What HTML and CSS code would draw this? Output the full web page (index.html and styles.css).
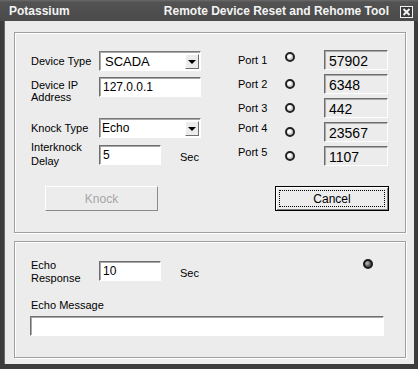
FILE: index.html
```html
<!DOCTYPE html>
<html lang="en">
<head>
	<meta charset="UTF-8" />
	<title>Potassium</title>
	<link rel="stylesheet" href="styles.css">
</head>
<body>
	<div class="window">
		<div class="titlebar">
			<span class="app-name">Potassium</span>
			<span class="title">Remote Device Reset and Rehome Tool</span>
			<span class="close">
				<svg width="13" height="12" viewBox="0 0 13 12">
					<rect x="0.5" y="0.5" width="12" height="11" fill="#3a3a3a" stroke="#f2f2f2" stroke-width="1" />
					<path d="M3.5 3 L9.5 9 M9.5 3 L3.5 9" stroke="#f2f2f2" stroke-width="2" />
				</svg>
			</span>
		</div>

		<div class="client">
			<div class="group group-knock">
				<div class="columns">
					<div class="form">
						<div class="row">
							<span class="label">Device Type</span>
							<div class="combo combo-big">
								<span class="combo-text">SCADA</span>
								<span class="arrow"></span>
							</div>
						</div>
						<div class="row row-ip">
							<span class="label label-two">Device IP<br>Address</span>
							<div class="field field-wide">127.0.0.1</div>
						</div>
						<div class="row row-knock">
							<span class="label">Knock Type</span>
							<div class="combo">
								<span class="combo-text">Echo</span>
								<span class="arrow"></span>
							</div>
						</div>
						<div class="row row-delay">
							<span class="label label-two label-up">Interknock<br>Delay</span>
							<div class="field field-short">5</div>
							<span class="unit">Sec</span>
						</div>
					</div>

					<div class="ports">
						<div class="port"><span class="port-label">Port 1</span><span class="radio"></span><span class="port-box">57902</span></div>
						<div class="port"><span class="port-label">Port 2</span><span class="radio"></span><span class="port-box">6348</span></div>
						<div class="port"><span class="port-label">Port 3</span><span class="radio"></span><span class="port-box">442</span></div>
						<div class="port"><span class="port-label lift">Port 4</span><span class="radio"></span><span class="port-box">23567</span></div>
						<div class="port"><span class="port-label lift">Port 5</span><span class="radio"></span><span class="port-box">1107</span></div>
					</div>
				</div>

				<div class="actions">
					<button class="btn btn-disabled">Knock</button>
					<button class="btn btn-default"><span class="focus">Cancel</span></button>
				</div>
			</div>

			<div class="group group-echo">
				<div class="row">
					<span class="label label-two label-echo">Echo<br>Response</span>
					<div class="field field-short">10</div>
					<span class="unit">Sec</span>
					<span class="led"></span>
				</div>
				<div class="msg-label">Echo Message</div>
				<div class="field field-msg"></div>
			</div>
		</div>
	</div>
</body>
</html>
```

FILE: styles.css
```css
body {
	margin: 0;
	background: #ececec;
	font-family: "Liberation Sans", Arial, sans-serif;
	font-size: 11px;
	color: #000;
}

.window {
	width: 418px;
	height: 369px;
	display: flex;
	flex-direction: column;
	background: #ececec;
}

.titlebar {
	height: 21px;
	flex: none;
	display: flex;
	align-items: center;
	padding: 0 5px 0 9px;
	background: linear-gradient(#6a6a6a 0, #535353 2px, #4a4a4a 100%);
	color: #f4f4f4;
	font-size: 12px;
	font-weight: bold;
}

.app-name {
	flex: 1;
	margin-top: 1px;
}

.title {
	margin-top: 1px;
	margin-right: 11px;
}

.close {
	display: flex;
	margin-top: 3px;
}

.client {
	flex: 1;
	border: solid #3c3c3c;
	border-width: 0 4px 5px 4px;
	box-shadow: inset 1px 0 0 #6a6a6a;
}

.group {
	margin: 0 8px 0 10px;
	border: 1px solid #a0a0a0;
	box-shadow: 1px 1px 0 #fff, inset 1px 1px 0 #fff;
}

.group-knock {
	margin-top: 11px;
	padding: 17px 16px 21px 16px;
}

.group-echo {
	margin-top: 8px;
	padding: 19px 21px 21px 16px;
}

.columns {
	display: flex;
}

.form {
	width: 170px;
	margin-top: 1px;
}

.row {
	display: flex;
	align-items: center;
	height: 20px;
}

.row-ip {
	margin-top: 6px;
}

.row-knock {
	margin-top: 21px;
}

.row-delay {
	margin-top: 7px;
}

.label {
	width: 68px;
	flex: none;
	line-height: 13px;
}

.label-two {
	align-self: flex-start;
	line-height: 12px;
	margin-top: 2px;
}

.label-up {
	line-height: 14px;
	margin-top: -5px;
}

.label-echo {
	line-height: 13px;
	margin-top: -2px;
}

.combo {
	width: 102px;
	height: 20px;
	box-sizing: border-box;
	display: flex;
	align-items: center;
	background: #fff;
	border: 1px solid;
	border-color: #7a7a7a #fff #fff #7a7a7a;
	box-shadow: inset 1px 1px 0 #a8a8a8;
	font-size: 12px;
}

.combo-text {
	flex: 1;
	padding-left: 2px;
}

.combo-big .combo-text {
	padding-left: 5px;
	font-size: 13px;
}

.arrow {
	width: 14px;
	height: 15px;
	box-sizing: border-box;
	margin-right: 1px;
	background: #ececec;
	border: 1px solid;
	border-color: #fff #6e6e6e #6e6e6e #fff;
	display: flex;
	align-items: center;
	justify-content: center;
}

.arrow::after {
	content: "";
	border-left: 4px solid transparent;
	border-right: 4px solid transparent;
	border-top: 4px solid #000;
	margin-top: 1px;
}

.field {
	height: 20px;
	box-sizing: border-box;
	background: #fff;
	border: 1px solid;
	border-color: #6e6e6e #fff #fff #6e6e6e;
	box-shadow: inset 1px 1px 0 #a8a8a8;
	padding: 2px 0 0 3px;
	font-size: 12px;
	line-height: 15px;
}

.field-wide {
	width: 102px;
}

.field-short {
	width: 62px;
}

.field-msg {
	margin-left: -1px;
	width: 354px;
}

.unit {
	margin-left: 19px;
	margin-top: 3px;
}

.ports {
	margin-left: 37px;
	display: grid;
	grid-auto-rows: 20px;
	row-gap: 4px;
}

.port {
	display: flex;
	align-items: center;
}

.port-label {
	width: 47px;
}

.lift {
	margin-top: -8px;
}

.radio {
	width: 10px;
	height: 10px;
	box-sizing: border-box;
	border-radius: 50%;
	border: 2px solid #222;
	background: radial-gradient(circle at 35% 35%, #fff 0 1.5px, #ccc 3px);
}

.port:first-child .radio {
	margin-top: -6px;
}

.port-box {
	margin-left: 29px;
	width: 64px;
	height: 20px;
	box-sizing: border-box;
	border: 1px solid;
	border-color: #6e6e6e #fff #fff #6e6e6e;
	box-shadow: inset 1px 1px 0 #a8a8a8;
	padding: 2px 0 0 4px;
	font-size: 14px;
	line-height: 16px;
}

.actions {
	display: flex;
	justify-content: space-between;
	margin-top: 20px;
	padding-left: 14px;
}

.btn {
	height: 25px;
	margin: 0;
	padding: 0;
	box-sizing: border-box;
	background: #ececec;
	font-family: inherit;
	font-size: 12px;
}

.btn-disabled {
	width: 113px;
	border: 1px solid;
	border-color: #fff #8a8a8a #8a8a8a #fff;
	color: #a6a6a6;
}

.btn-default {
	width: 114px;
	border: 1px solid #000;
	box-shadow: inset 1px 1px 0 #fff, inset -1px -1px 0 #808080;
	padding: 3px;
	display: flex;
}

.focus {
	flex: 1;
	display: flex;
	align-items: center;
	justify-content: center;
	border: 1px dotted #000;
}

.led {
	width: 10px;
	height: 10px;
	box-sizing: border-box;
	border-radius: 50%;
	border: 2px solid #1a1a1a;
	background: radial-gradient(circle at 35% 35%, #aaa 0 1px, #5a5a5a 3px);
	margin-left: auto;
	margin-right: 11px;
	align-self: flex-start;
	margin-top: -2px;
}

.msg-label {
	margin-top: 18px;
	line-height: 13px;
}

.field-msg {
	margin-top: 4px;
}
```
